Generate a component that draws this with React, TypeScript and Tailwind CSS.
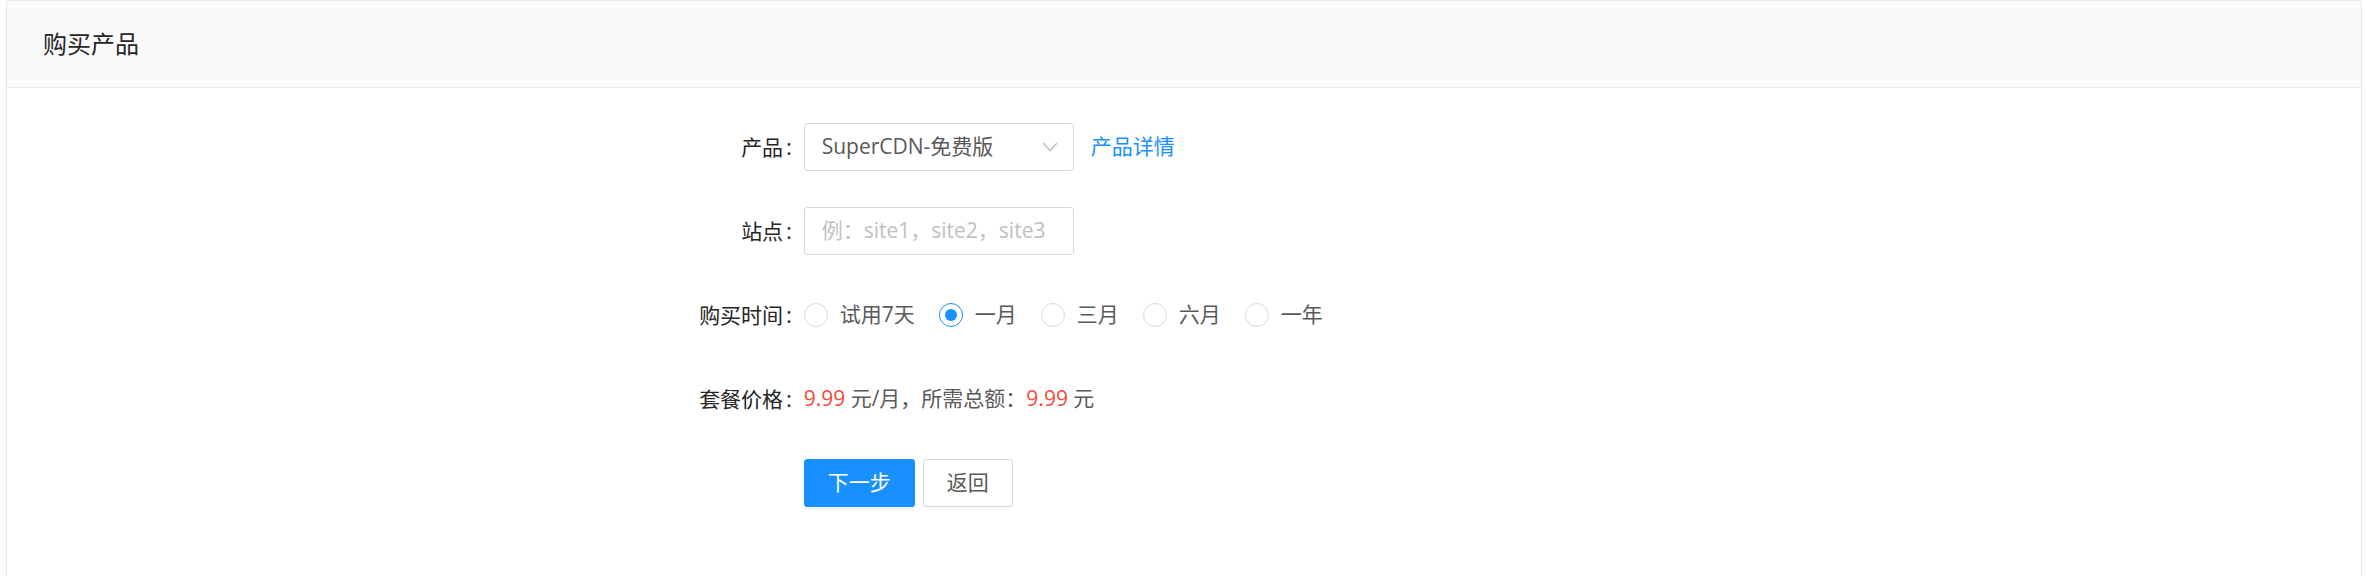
import React from "react";

function FormRow({ label, children, last }: { label?: string; children: React.ReactNode; last?: boolean }) {
  return (
    <div className={`flex h-[48px] items-center ${last ? "" : "mb-[36px]"}`}>
      <div className="w-1/3 shrink-0 pr-[12px] text-right text-[21px] leading-[48px] text-[#262626]">
        {label ? (
          <>
            {label}
            <span className="ml-[3px]">:</span>
          </>
        ) : null}
      </div>
      <div className="flex items-center">{children}</div>
    </div>
  );
}

function Radio({ text, checked }: { text: string; checked?: boolean }) {
  return (
    <label className="mr-[12px] flex items-center">
      <span
        className={`flex h-[24px] w-[24px] items-center justify-center rounded-full border-[1.5px] bg-white ${
          checked ? "border-[#1890ff]" : "border-[#d9d9d9]"
        }`}
      >
        {checked ? <span className="h-[12px] w-[12px] rounded-full bg-[#1890ff]" /> : null}
      </span>
      <span className="px-[12px] text-[21px] text-[#595959]">{text}</span>
    </label>
  );
}

export default function App() {
  return (
    <div className="min-h-[576px] bg-white pl-[6px] pr-[4px] font-['Open_Sans','Noto_Sans_CJK_SC',sans-serif]">
      <div className="rounded-[3px] border border-[#e8e8e8] bg-white">
        <div className="flex h-[87px] items-center rounded-t-[3px] border-b border-[#e8e8e8] bg-[#fafafa] px-[36px] text-[24px] text-[#262626]">
          购买产品
        </div>
        <div className="px-[36px] pt-[35px] pb-[90px]">
          <FormRow label="产品">
            <div className="flex h-[48px] w-[270px] items-center justify-between rounded-[3px] border border-[#d9d9d9] bg-white pl-[17px] pr-[15px] text-[21px] text-[#595959]">
              <span>SuperCDN-免费版</span>
              <svg width="16" height="10" viewBox="0 0 16 10" fill="none">
                <path d="M1 1 L8 8.5 L15 1" stroke="#bfbfbf" strokeWidth="1.6" />
              </svg>
            </div>
            <a className="ml-[17px] cursor-pointer text-[21px] text-[#1890ff]">产品详情</a>
          </FormRow>
          <FormRow label="站点">
            <div className="flex h-[48px] w-[270px] items-center rounded-[3px] border border-[#d9d9d9] bg-white px-[17px] text-[21px] text-[#bfbfbf]">
              例：site1，site2，site3
            </div>
          </FormRow>
          <FormRow label="购买时间">
            <Radio text="试用7天" />
            <Radio text="一月" checked />
            <Radio text="三月" />
            <Radio text="六月" />
            <Radio text="一年" />
          </FormRow>
          <FormRow label="套餐价格">
            <span className="text-[21px] text-[#595959]">
              <span className="text-[#f04a3a]">9.99</span> 元/月，所需总额：<span className="text-[#f04a3a]">9.99</span> 元
            </span>
          </FormRow>
          <FormRow last>
            <button className="h-[48px] rounded-[3px] border border-[#1890ff] bg-[#1890ff] px-[23px] text-[21px] text-white shadow-[0_3px_0_rgba(0,0,0,0.045)]">
              下一步
            </button>
            <button className="ml-[8px] h-[48px] rounded-[3px] border border-[#d9d9d9] bg-white px-[23px] text-[21px] text-[#595959] shadow-[0_3px_0_rgba(0,0,0,0.015)]">
              返回
            </button>
          </FormRow>
        </div>
      </div>
    </div>
  );
}
